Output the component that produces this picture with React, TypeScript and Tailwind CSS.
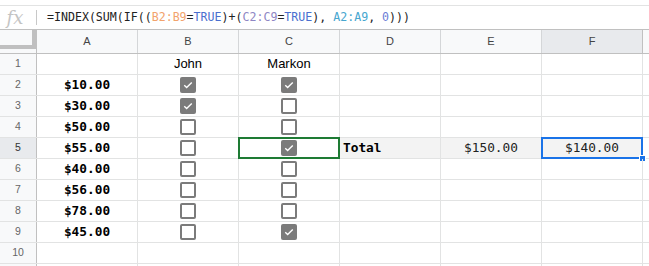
import React from 'react';

const amounts = ['$10.00', '$30.00', '$50.00', '$55.00', '$40.00', '$56.00', '$78.00', '$45.00'];
const john = [true, true, false, false, false, false, false, false];
const markon = [true, false, false, true, false, false, false, true];
const cols = ['A', 'B', 'C', 'D', 'E', 'F'];

const mono = { fontFamily: "'DejaVu Sans Mono', 'Liberation Mono', monospace" };
const sans = { fontFamily: "Arial, 'Liberation Sans', sans-serif" };

function Box({ on }: { on: boolean }) {
  if (on) {
    return (
      <span className="flex h-[16px] w-[16px] items-center justify-center rounded-[2px] bg-[#7b7b7b]">
        <svg width="12" height="12" viewBox="0 0 24 24">
          <path d="M4.5 12.5l4.8 4.6L19.5 7" stroke="white" strokeWidth="2.8" fill="none" />
        </svg>
      </span>
    );
  }
  return <span className="h-[16px] w-[16px] rounded-[2px] border-2 border-[#7b7b7b] bg-white" />;
}

function Cell({ children, className = '' }: { children?: React.ReactNode; className?: string }) {
  return (
    <div className={`relative flex h-full w-[101px] shrink-0 items-center justify-center border-r border-[#e2e3e3] ${className}`}>
      {children}
    </div>
  );
}

export default function App() {
  const rows = Array.from({ length: 11 }, (_, i) => i + 1);
  return (
    <div className="h-[266px] w-[649px] overflow-hidden bg-white" style={sans}>
      <div className="h-[6px] border-b border-[#e2e3e3]" />

      {/* Formula bar */}
      <div className="flex h-[24px] items-center border-b border-[#c0c0c0]">
        <div className="flex w-[36px] items-center justify-center">
          <span className="ml-[-6px] text-[18px] italic text-[#c4c4c4]" style={{ fontFamily: "'DejaVu Serif', serif" }}>
            fx
          </span>
        </div>
        <div className="h-[15px] w-px bg-[#c8c8c8]" />
        <div className="ml-[10px] text-[11.6px] text-[#222]" style={mono}>
          =INDEX(SUM(IF((<span className="text-[#f2a36c]">B2:B9</span>=<span className="text-[#4a6fcf]">TRUE</span>)+(
          <span className="text-[#8e86c4]">C2:C9</span>=<span className="text-[#4a6fcf]">TRUE</span>),{' '}
          <span className="text-[#47a6cf]">A2:A9</span>, <span className="text-[#6b7dd6]">0</span>)))
        </div>
      </div>

      {/* Column headers */}
      <div className="flex h-[24px] border-b border-[#c0c0c0] bg-[#f8f9fa] text-[11px] text-[#444]">
        <div className="relative w-[37px] shrink-0 border-r border-[#c0c0c0]">
          <div className="absolute right-0 top-0 h-[19px] w-[4px] bg-[#c0c0c0]" />
          <div className="absolute left-0 top-[15px] h-[4px] w-[36px] bg-[#c0c0c0]" />
        </div>
        {cols.map((c) => (
          <div
            key={c}
            className={`flex w-[101px] shrink-0 items-center justify-center border-r border-[#d4d6d8] ${c === 'F' ? 'border-r-[#c0c0c0] bg-[#e8eaed]' : ''}`}
          >
            {c}
          </div>
        ))}
        <div className="flex-1" />
      </div>

      {/* Rows */}
      {rows.map((r) => {
        const i = r - 2;
        const data = r >= 2 && r <= 9;
        const sel = r === 5;
        return (
          <div key={r} className="flex h-[21px] border-b border-[#e2e3e3]">
            <div
              className={`flex w-[37px] shrink-0 items-center justify-center border-r border-[#c0c0c0] text-[10.5px] ${sel ? 'bg-[#e8eaed] text-[#333]' : 'bg-[#f8f9fa] text-[#666]'}`}
            >
              {r <= 10 ? r : ''}
            </div>
            <Cell>
              {data && (
                <span className="text-[12.8px] font-bold text-black" style={mono}>
                  {amounts[i]}
                </span>
              )}
            </Cell>
            <Cell>
              {r === 1 && <span className="text-[13px] text-black">John</span>}
              {data && <Box on={john[i]} />}
            </Cell>
            <Cell>
              {r === 1 && <span className="text-[13px] text-black">Markon</span>}
              {data && <Box on={markon[i]} />}
              {sel && <div className="absolute inset-[-1px] border-2 border-[#1e7b34]" />}
            </Cell>
            <Cell className={sel ? 'justify-start bg-[#f3f3f3] pl-[3px]' : ''}>
              {sel && (
                <span className="text-[12.8px] font-bold text-black" style={mono}>
                  Total
                </span>
              )}
            </Cell>
            <Cell className={sel ? 'bg-[#f3f3f3]' : ''}>
              {sel && (
                <span className="text-[12.8px] text-[#222]" style={mono}>
                  $150.00
                </span>
              )}
            </Cell>
            <Cell className={sel ? 'bg-[#f3f3f3]' : ''}>
              {sel && (
                <>
                  <span className="text-[12.8px] text-[#222]" style={mono}>
                    $140.00
                  </span>
                  <div className="absolute inset-[-1px] border-2 border-[#1a73e8]" />
                  <div className="absolute bottom-[-4px] right-[-4px] h-[7px] w-[7px] border border-white bg-[#1a73e8]" />
                </>
              )}
            </Cell>
            <div className="flex-1" />
          </div>
        );
      })}
    </div>
  );
}
